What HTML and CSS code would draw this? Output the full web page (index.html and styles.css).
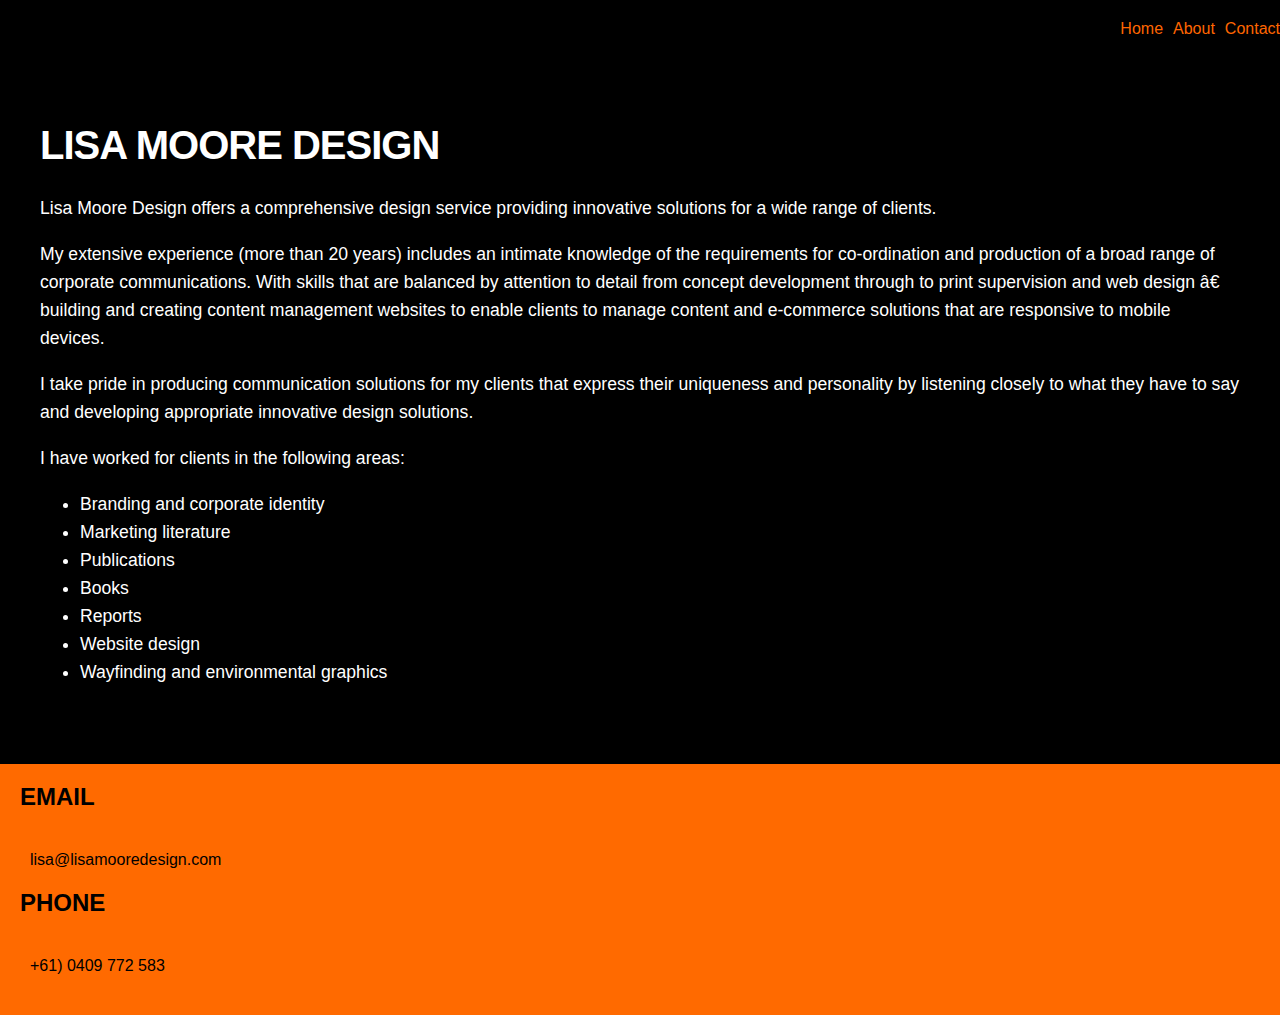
FILE: index.html
```html
<!DOCTYPE html>
<html lang="en">
<head>
<meta charset="utf-8">
<title>Lisa Moore Design</title>
<link rel="stylesheet" href="styles.css">
</head>
<body>
<header class="site-header">
  <nav class="nav">
    <a href="#" class="nav-link">Home</a>
    <a href="#" class="nav-link">About</a>
    <a href="#" class="nav-link">Contact</a>
  </nav>
</header>
<main class="intro">
  <h1 class="title">LISA MOORE DESIGN</h1>
  <p class="text">Lisa Moore Design offers a comprehensive design service providing innovative solutions for a wide range of clients.</p>
  <p class="text">My extensive experience (more than 20 years) includes an intimate knowledge of the requirements for co-ordination and production of a broad range of corporate communications. With skills that are balanced by attention to detail from concept development through to print supervision and web design â€ building and creating content management websites to enable clients to manage content and e-commerce solutions that are responsive to mobile devices.</p>
  <p class="text">I take pride in producing communication solutions for my clients that express their uniqueness and personality by listening closely to what they have to say and developing appropriate innovative design solutions.</p>
  <p class="text">I have worked for clients in the following areas:</p>
  <ul class="areas">
    <li>Branding and corporate identity</li>
    <li>Marketing literature</li>
    <li>Publications</li>
    <li>Books</li>
    <li>Reports</li>
    <li>Website design</li>
    <li>Wayfinding and environmental graphics</li>
  </ul>
</main>
<footer class="contact">
  <h2 class="contact-title">EMAIL</h2>
  <p class="contact-value">lisa@lisamooredesign.com</p>
  <h2 class="contact-title">PHONE</h2>
  <p class="contact-value">+61) 0409 772 583</p>
</footer>
</body>
</html>
```
FILE: styles.css
```css
html, body {
  margin: 0;
  padding: 0;
}
body {
  background: #000;
  color: #fff;
  font-family: "Liberation Sans", Arial, sans-serif;
}
.site-header {
  padding: 20px 0 18px;
}
.nav {
  display: flex;
  justify-content: flex-end;
  gap: 10px;
}
.nav-link {
  color: #ff6600;
  text-decoration: none;
  font-size: 16px;
}
.intro {
  padding: 67px 41px 78px 40px;
}
.title {
  font-size: 40px;
  font-weight: bold;
  line-height: normal;
  letter-spacing: -1px;
  margin: 0 0 26px;
}
.text {
  font-size: 17.6px;
  line-height: 1.6;
  margin: 0 0 17.6px;
}
.areas {
  font-size: 17.6px;
  line-height: 1.6;
  margin: 0;
  padding-left: 40px;
}
.contact {
  background: #ff6a00;
  color: #000;
  padding: 19px 20px 20px;
}
.contact-title {
  font-size: 24px;
  font-weight: bold;
  line-height: normal;
  margin: 0;
}
.contact-value {
  font-size: 16px;
  margin: 30px 0 10px;
  padding: 10px;
}
```
